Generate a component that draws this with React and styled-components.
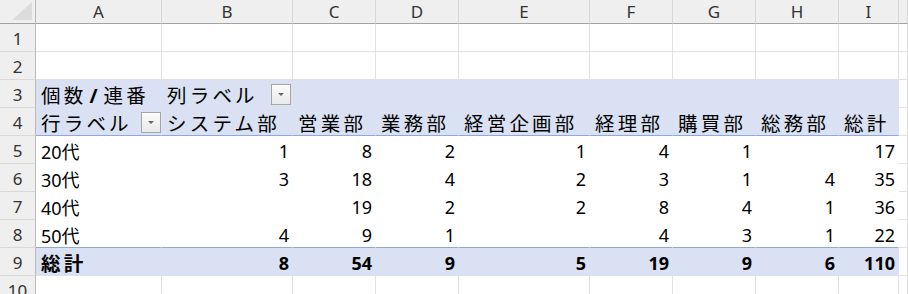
import styled, { createGlobalStyle, css } from "styled-components"

const GlobalStyle = createGlobalStyle`
html, body {
  margin: 0;
  background: #fff;
  overflow: hidden;
}
`

const COLS = "36px 126px 131px 83px 83px 131px 83px 83px 83px 60px 1fr"
const LETTERS = ["A", "B", "C", "D", "E", "F", "G", "H", "I", ""]

const Sheet = styled.div`
display: grid;
grid-template-columns: ${COLS};
grid-template-rows: 24px repeat(10, 28px);
width: 908px;
height: 294px;
overflow: hidden;
font-family: "Noto Sans", "Noto Sans CJK JP", sans-serif;
color: #000;
`

const Row = styled.div`
display: contents;
`

const Corner = styled.div`
box-sizing: border-box;
background: #efefef;
border-right: 1px solid #b9b9b9;
border-bottom: 1px solid #a3a3a3;
display: flex;
align-items: flex-end;
justify-content: flex-end;
padding: 0 3px 3px 0;
`

const ColHead = styled.div`
box-sizing: border-box;
background: #efefef;
border-right: 1px solid #d8d8d8;
border-bottom: 1px solid #a3a3a3;
display: flex;
align-items: center;
justify-content: center;
font-size: 17px;
color: #333;
`

const RowHead = styled.div`
box-sizing: border-box;
background: #efefef;
border-right: 1px solid #b9b9b9;
border-bottom: 1px solid #d8d8d8;
display: flex;
align-items: center;
justify-content: center;
padding-top: 2px;
font-size: 17px;
color: #333;
`

const Cell = styled.div`
box-sizing: border-box;
display: flex;
align-items: center;
justify-content: ${p => (p.$right ? "flex-end" : "flex-start")};
padding: 2px 3px 0 5px;
border-right: 1px solid #e1e1e1;
border-bottom: 1px solid #e1e1e1;
font-size: 18px;
white-space: nowrap;
${p => p.$band && css`
  background: #d9e1f2;
  border-color: #d9e1f2;
`}
${p => p.$plain && css`
  background: #fff;
  border-color: #fff;
`}
${p => p.$rule && css`
  border-bottom-color: #8ea9db;
`}
${p => p.$bold && css`
  font-weight: 700;
`}
${p => p.$tight && css`
  padding-right: 0;
`}
`

const Label = styled.span`
font-family: "Noto Sans CJK JP", sans-serif;
font-size: 19.5px;
letter-spacing: 3.2px;
font-weight: ${p => (p.$bold ? 700 : 400)};
`

const Slash = styled.span`
font-family: "Noto Sans", sans-serif;
font-weight: 700;
letter-spacing: 0;
margin: 0 6px 0 3px;
`

const Drop = styled.span`
box-sizing: border-box;
width: 20px;
height: 21px;
margin-left: auto;
align-self: flex-end;
margin-bottom: 2px;
border: 1px solid #a6a6a6;
background: linear-gradient(#fbfbfb, #e9e9e9);
display: flex;
align-items: center;
justify-content: center;

&::after {
  content: "";
  border-left: 3.5px solid transparent;
  border-right: 3.5px solid transparent;
  border-top: 3.5px solid #666;
}
`

const depts = ["システム部", "営業部", "業務部", "経営企画部", "経理部", "購買部", "総務部", "総計"]

const ages = [
    ["20代", [1, 8, 2, 1, 4, 1, "", 17]],
    ["30代", [3, 18, 4, 2, 3, 1, 4, 35]],
    ["40代", ["", 19, 2, 2, 8, 4, 1, 36]],
    ["50代", [4, 9, 1, "", 4, 3, 1, 22]],
]

const totals = [8, 54, 9, 5, 19, 9, 6, 110]

function EmptyRow({ n }) {
    return (
        <Row>
            <RowHead>{n}</RowHead>
            {LETTERS.map((l, i) => <Cell key={i} />)}
        </Row>
    )
}

function App() {
    return (
        <>
            <GlobalStyle />
            <Sheet>
                <Row>
                    <Corner>
                        <svg width="20" height="18" viewBox="0 0 20 18">
                            <polygon points="20,0 20,18 0,18" fill="#dcdcdc" />
                        </svg>
                    </Corner>
                    {LETTERS.map((l, i) => <ColHead key={i}>{l}</ColHead>)}
                </Row>

                <EmptyRow n={1} />
                <EmptyRow n={2} />

                <Row>
                    <RowHead>3</RowHead>
                    <Cell $band>
                        <Label>個数<Slash>/</Slash>連番</Label>
                    </Cell>
                    <Cell $band style={{ paddingRight: 1 }}>
                        <Label>列ラベル</Label>
                        <Drop />
                    </Cell>
                    {depts.slice(1).map((d, i) => <Cell key={i} $band />)}
                    <Cell />
                </Row>

                <Row>
                    <RowHead>4</RowHead>
                    <Cell $band $rule $tight>
                        <Label>行ラベル</Label>
                        <Drop />
                    </Cell>
                    {depts.map(d => (
                        <Cell key={d} $band $rule>
                            <Label>{d}</Label>
                        </Cell>
                    ))}
                    <Cell />
                </Row>

                {ages.map(([age, vals], r) => (
                    <Row key={age}>
                        <RowHead>{r + 5}</RowHead>
                        <Cell $plain $rule={r === ages.length - 1}>{age}</Cell>
                        {vals.map((v, i) => (
                            <Cell key={i} $plain $right $rule={r === ages.length - 1}>{v}</Cell>
                        ))}
                        <Cell />
                    </Row>
                ))}

                <Row>
                    <RowHead>9</RowHead>
                    <Cell $band>
                        <Label $bold>総計</Label>
                    </Cell>
                    {totals.map((v, i) => (
                        <Cell key={i} $band $right $bold>{v}</Cell>
                    ))}
                    <Cell />
                </Row>

                <EmptyRow n={10} />
            </Sheet>
        </>
    )
}

export default App
